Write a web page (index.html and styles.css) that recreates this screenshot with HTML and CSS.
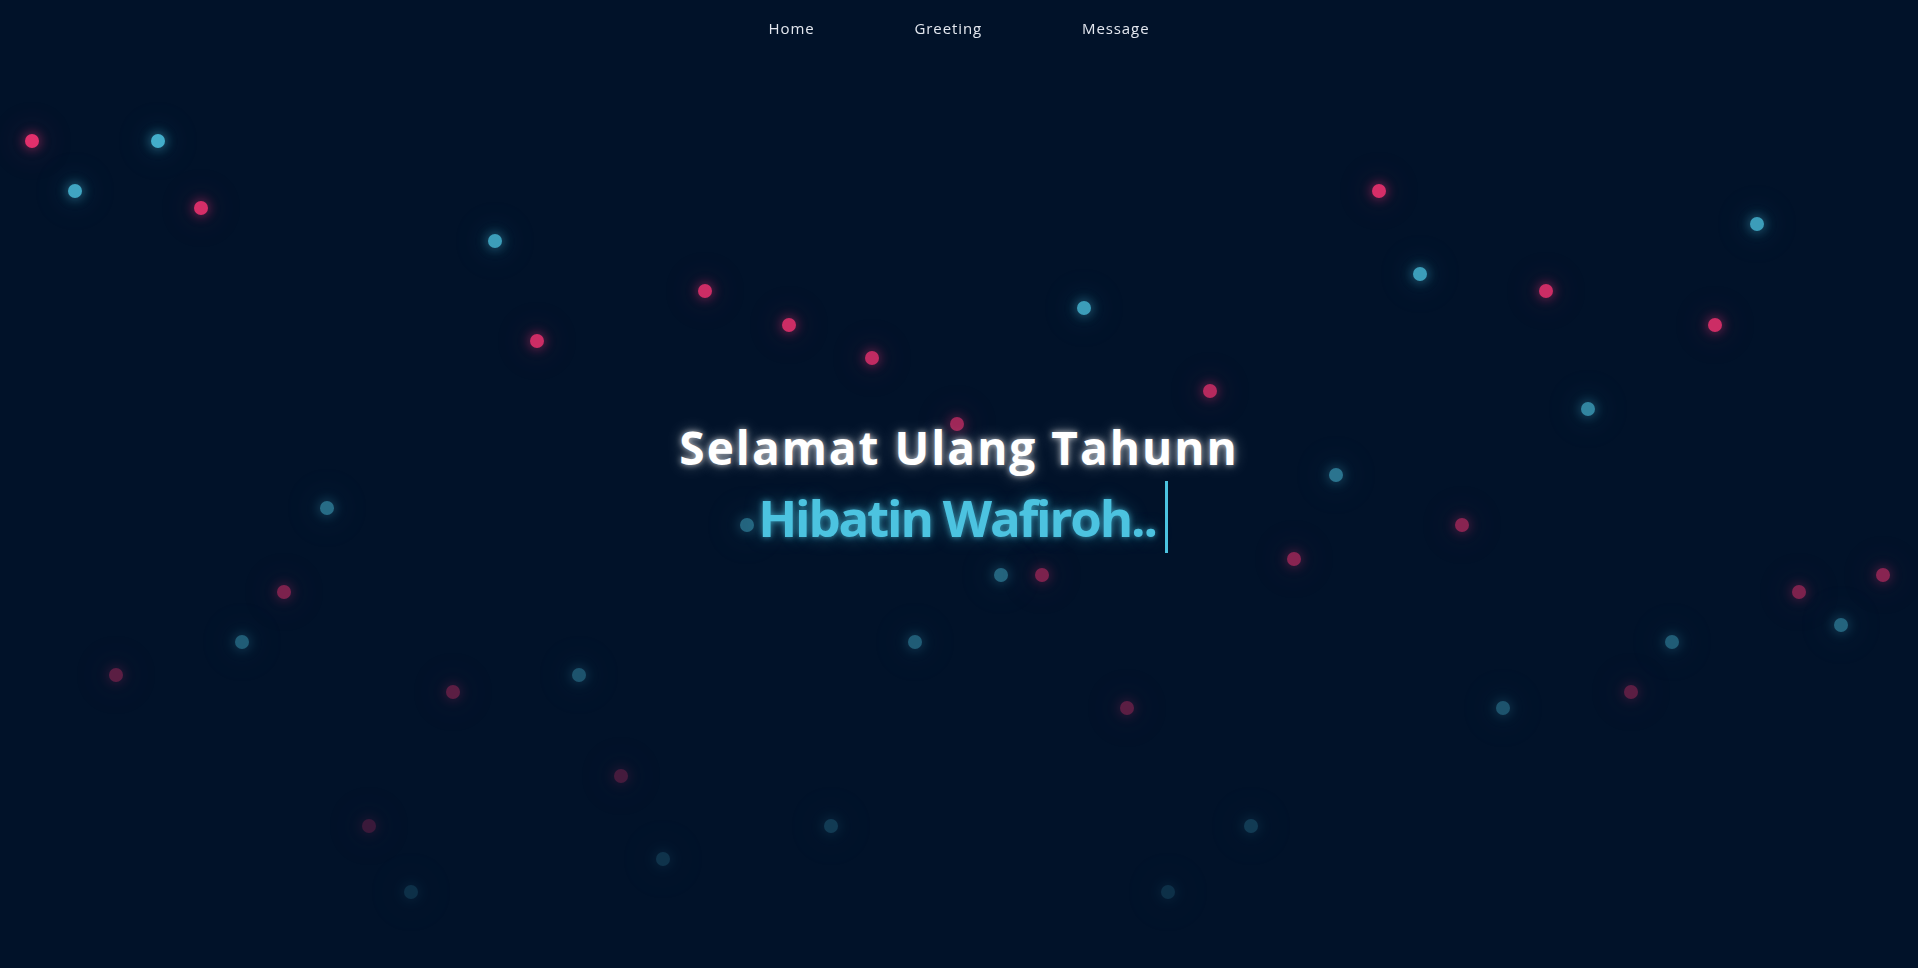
FILE: index.html
```html
<!DOCTYPE html>
<html lang="id">
<head>
<meta charset="utf-8">
<title>Selamat Ulang Tahun</title>
<link rel="stylesheet" href="styles.css">
</head>
<body>
<div class="particles">
  <span class="dot pink" style="left:32px;top:141px;opacity:1"></span>
  <span class="dot cyan" style="left:158px;top:141px;opacity:.95"></span>
  <span class="dot cyan" style="left:75px;top:191px;opacity:.9"></span>
  <span class="dot pink" style="left:201px;top:208px;opacity:.95"></span>
  <span class="dot cyan" style="left:495px;top:241px;opacity:.85"></span>
  <span class="dot pink" style="left:705px;top:291px;opacity:.9"></span>
  <span class="dot pink" style="left:789px;top:325px;opacity:.9"></span>
  <span class="dot pink" style="left:537px;top:341px;opacity:.9"></span>
  <span class="dot pink" style="left:872px;top:358px;opacity:.85"></span>
  <span class="dot cyan" style="left:1084px;top:308px;opacity:.85"></span>
  <span class="dot pink" style="left:1379px;top:191px;opacity:.95"></span>
  <span class="dot cyan" style="left:1420px;top:274px;opacity:.85"></span>
  <span class="dot pink" style="left:1546px;top:291px;opacity:.9"></span>
  <span class="dot cyan" style="left:1757px;top:224px;opacity:.85"></span>
  <span class="dot pink" style="left:1715px;top:325px;opacity:.9"></span>
  <span class="dot pink" style="left:1210px;top:391px;opacity:.8"></span>
  <span class="dot cyan" style="left:1588px;top:409px;opacity:.7"></span>
  <span class="dot pink" style="left:957px;top:424px;opacity:.7"></span>
  <span class="dot cyan" style="left:1336px;top:475px;opacity:.6"></span>
  <span class="dot cyan" style="left:327px;top:508px;opacity:.55"></span>
  <span class="dot cyan" style="left:747px;top:525px;opacity:.5"></span>
  <span class="dot pink" style="left:1462px;top:525px;opacity:.6"></span>
  <span class="dot pink" style="left:1294px;top:559px;opacity:.6"></span>
  <span class="dot cyan" style="left:1001px;top:575px;opacity:.5"></span>
  <span class="dot pink" style="left:1042px;top:575px;opacity:.55"></span>
  <span class="dot pink" style="left:284px;top:592px;opacity:.55"></span>
  <span class="dot pink" style="left:1799px;top:592px;opacity:.55"></span>
  <span class="dot pink" style="left:1883px;top:575px;opacity:.6"></span>
  <span class="dot cyan" style="left:1841px;top:625px;opacity:.5"></span>
  <span class="dot cyan" style="left:242px;top:642px;opacity:.45"></span>
  <span class="dot cyan" style="left:915px;top:642px;opacity:.45"></span>
  <span class="dot cyan" style="left:1672px;top:642px;opacity:.45"></span>
  <span class="dot pink" style="left:116px;top:675px;opacity:.4"></span>
  <span class="dot cyan" style="left:579px;top:675px;opacity:.4"></span>
  <span class="dot pink" style="left:453px;top:692px;opacity:.4"></span>
  <span class="dot pink" style="left:1631px;top:692px;opacity:.4"></span>
  <span class="dot pink" style="left:1127px;top:708px;opacity:.4"></span>
  <span class="dot cyan" style="left:1503px;top:708px;opacity:.4"></span>
  <span class="dot pink" style="left:621px;top:776px;opacity:.3"></span>
  <span class="dot pink" style="left:369px;top:826px;opacity:.25"></span>
  <span class="dot cyan" style="left:831px;top:826px;opacity:.25"></span>
  <span class="dot cyan" style="left:1251px;top:826px;opacity:.25"></span>
  <span class="dot cyan" style="left:663px;top:859px;opacity:.2"></span>
  <span class="dot cyan" style="left:411px;top:892px;opacity:.18"></span>
  <span class="dot cyan" style="left:1168px;top:892px;opacity:.18"></span>
</div>

<nav class="nav">
  <a class="nav-link" href="#home">Home</a>
  <a class="nav-link" href="#greeting">Greeting</a>
  <a class="nav-link" href="#message">Message</a>
</nav>

<main class="hero" id="home">
  <h1 class="title">Selamat Ulang Tahunn</h1>
  <p class="name"><span class="typed">Hibatin Wafiroh..</span></p>
</main>
</body>
</html>
```

FILE: styles.css
```css
* {
  box-sizing: border-box;
}

html, body {
  margin: 0;
  padding: 0;
  height: 100%;
}

body {
  background: #011229;
  font-family: "Open Sans", "Noto Sans", sans-serif;
  color: #ffffff;
  overflow: hidden;
  position: relative;
}

.particles {
  position: absolute;
  inset: 0;
  z-index: 0;
  pointer-events: none;
}

.dot {
  position: absolute;
  width: 14px;
  height: 14px;
  border-radius: 50%;
  transform: translate(-50%, -50%);
}

.dot.pink {
  background: #e2306c;
  box-shadow: 0 0 10px 3px rgba(226, 48, 108, 0.35), 0 0 30px 12px rgba(226, 48, 108, 0.08);
}

.dot.cyan {
  background: #47b6d3;
  box-shadow: 0 0 10px 3px rgba(71, 182, 211, 0.35), 0 0 30px 12px rgba(71, 182, 211, 0.08);
}

.nav {
  position: fixed;
  top: 0;
  left: 0;
  right: 0;
  height: 56px;
  display: flex;
  justify-content: center;
  align-items: center;
  gap: 100px;
  z-index: 2;
}

.nav-link {
  color: #e4e8f0;
  text-decoration: none;
  font-size: 15px;
  letter-spacing: 0.9px;
  font-weight: 400;
  line-height: 1;
}

.hero {
  position: relative;
  z-index: 1;
  height: 100vh;
  display: flex;
  flex-direction: column;
  align-items: center;
  justify-content: center;
  text-align: center;
  padding-top: 2px;
}

.title {
  margin: 0 0 4px;
  font-size: 46px;
  font-weight: 700;
  line-height: 63px;
  letter-spacing: 2px;
  color: #ffffff;
  text-shadow: 0 0 6px rgba(255, 255, 255, 0.7), 0 0 16px rgba(255, 255, 255, 0.35);
}

.name {
  margin: 0;
  font-size: 51px;
  font-weight: 700;
  line-height: 72px;
  letter-spacing: -2.2px;
  color: #4cc3e0;
  text-shadow: 0 0 6px rgba(76, 195, 224, 0.7), 0 0 18px rgba(76, 195, 224, 0.4);
}

.typed {
  display: inline-block;
  height: 72px;
  padding-right: 9px;
  border-right: 3px solid #4cc3e0;
  position: relative;
  top: -2px;
  left: 4px;
}
```
